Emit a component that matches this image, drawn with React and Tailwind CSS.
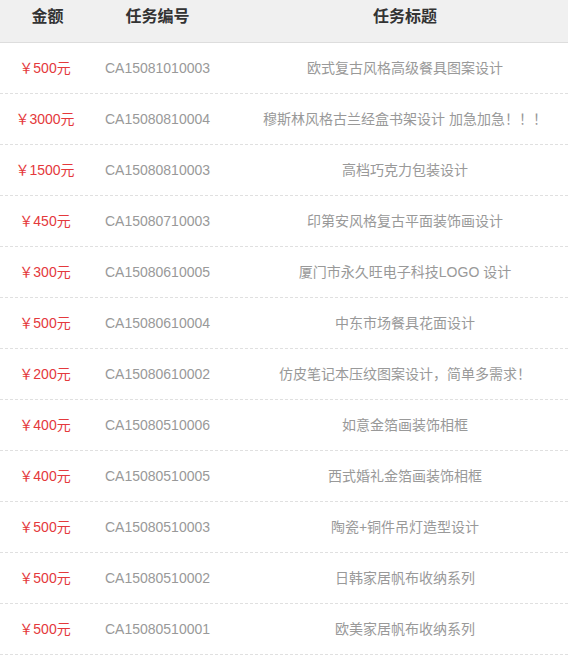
import React from "react";

const tasks = [
  { amount: "500", code: "CA15081010003", title: "欧式复古风格高级餐具图案设计" },
  { amount: "3000", code: "CA15080810004", title: "穆斯林风格古兰经盒书架设计 加急加急！！！" },
  { amount: "1500", code: "CA15080810003", title: "高档巧克力包装设计" },
  { amount: "450", code: "CA15080710003", title: "印第安风格复古平面装饰画设计" },
  { amount: "300", code: "CA15080610005", title: "厦门市永久旺电子科技LOGO 设计" },
  { amount: "500", code: "CA15080610004", title: "中东市场餐具花面设计" },
  { amount: "200", code: "CA15080610002", title: "仿皮笔记本压纹图案设计，简单多需求！" },
  { amount: "400", code: "CA15080510006", title: "如意金箔画装饰相框" },
  { amount: "400", code: "CA15080510005", title: "西式婚礼金箔画装饰相框" },
  { amount: "500", code: "CA15080510003", title: "陶瓷+铜件吊灯造型设计" },
  { amount: "500", code: "CA15080510002", title: "日韩家居帆布收纳系列" },
  { amount: "500", code: "CA15080510001", title: "欧美家居帆布收纳系列" },
];

export default function App() {
  return (
    <div
      className="w-[568px] h-[655px] overflow-hidden bg-white"
      style={{ fontFamily: '"Liberation Sans", "Noto Sans CJK SC", sans-serif' }}
    >
      <div className="grid h-[43px] grid-cols-[90px_135px_1fr] items-center border-b border-[#dddddd] bg-[#f0f0f0] pb-[8px] text-[16px] font-bold text-[#333333]">
        <div className="pl-[5px] text-center">金额</div>
        <div className="text-center">任务编号</div>
        <div className="pl-[17px] text-center">任务标题</div>
      </div>

      {tasks.map((task) => (
        <div
          key={task.code}
          className="grid h-[51px] grid-cols-[90px_135px_1fr] items-center border-b border-dashed border-[#e0e0e0] text-[14px]"
        >
          <div className="text-center text-[#e4393c]">￥{task.amount}元</div>
          <div className="text-center text-[#999999]">{task.code}</div>
          <div className="pl-[17px] text-center whitespace-nowrap text-[#999999]">
            {task.title}
          </div>
        </div>
      ))}
    </div>
  );
}
